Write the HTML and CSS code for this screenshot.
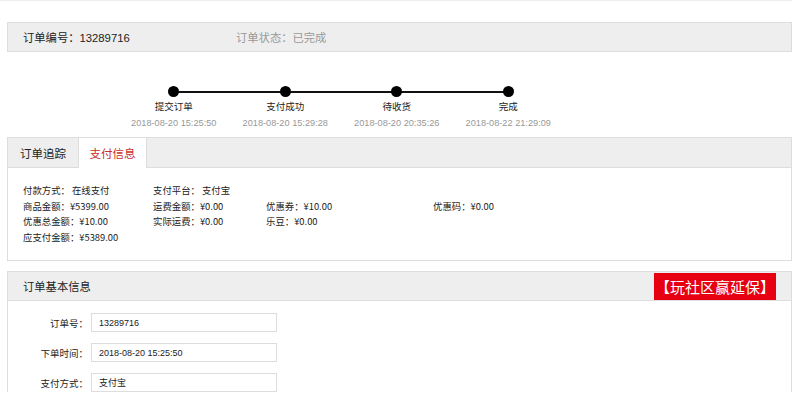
FILE: index.html
```html
<!DOCTYPE html>
<html lang="zh-CN">
<head>
  <meta charset="UTF-8">
  <meta name="viewport" content="width=device-width, initial-scale=1.0">
  <title>订单详情</title>
  <link rel="stylesheet" href="styles.css">
</head>
<body>
  <div class="top-line"></div>
  <main class="order-page">
    <!-- order header -->
    <div class="order-head">
      <span class="order-no">订单编号：13289716</span>
      <span class="order-status">订单状态：已完成</span>
    </div>

    <!-- progress -->
    <div class="timeline">
      <div class="timeline-track"></div>
      <div class="step">
        <span class="dot"></span>
        <span class="step-name">提交订单</span>
        <span class="step-time">2018-08-20 15:25:50</span>
      </div>
      <div class="step">
        <span class="dot"></span>
        <span class="step-name">支付成功</span>
        <span class="step-time">2018-08-20 15:29:28</span>
      </div>
      <div class="step">
        <span class="dot"></span>
        <span class="step-name">待收货</span>
        <span class="step-time">2018-08-20 20:35:26</span>
      </div>
      <div class="step">
        <span class="dot"></span>
        <span class="step-name">完成</span>
        <span class="step-time">2018-08-22 21:29:09</span>
      </div>
    </div>

    <!-- tabs -->
    <section class="panel">
      <div class="tabs">
        <span class="tab">订单追踪</span>
        <span class="tab active">支付信息</span>
      </div>
      <div class="pay-info">
        <div class="pay-row">
          <span class="col col-1">付款方式：&nbsp;在线支付</span>
          <span class="col col-2">支付平台：&nbsp;支付宝</span>
        </div>
        <div class="pay-row">
          <span class="col col-1">商品金额：¥5399.00</span>
          <span class="col col-2">运费金额：¥0.00</span>
          <span class="col col-3">优惠券：¥10.00</span>
          <span class="col">优惠码：¥0.00</span>
        </div>
        <div class="pay-row">
          <span class="col col-1">优惠总金额：¥10.00</span>
          <span class="col col-2">实际运费：¥0.00</span>
          <span class="col col-3">乐豆：¥0.00</span>
        </div>
        <div class="pay-row">
          <span class="col col-1">应支付金额：¥5389.00</span>
        </div>
      </div>
    </section>

    <!-- basic info -->
    <section class="panel basic">
      <div class="panel-head">
        <span class="panel-title">订单基本信息</span>
        <span class="promo">【玩社区赢延保】</span>
      </div>
      <div class="form">
        <div class="form-row">
          <label>订单号：</label>
          <input type="text" value="13289716" readonly>
        </div>
        <div class="form-row">
          <label>下单时间：</label>
          <input type="text" value="2018-08-20 15:25:50" readonly>
        </div>
        <div class="form-row">
          <label>支付方式：</label>
          <input type="text" value="支付宝" readonly>
        </div>
      </div>
    </section>
  </main>
</body>
</html>
```

FILE: styles.css
```css
:root {
  --border: #dddddd;
  --bar-bg: #eeeeee;
  --muted: #999999;
  --text: #333333;
}
body {
  font-family: "Liberation Sans", Arial, "Noto Sans CJK SC", sans-serif;
  margin: 0;
  padding: 0;
  background-color: #ffffff;
  color: var(--text);
}
.top-line {
  width: 792px;
  height: 1px;
  background-color: #eeeeee;
}
.order-page {
  width: 785px;
  margin-left: 7px;
}
.order-head {
  margin-top: 21px;
  height: 28px;
  border: 1px solid var(--border);
  background-color: var(--bar-bg);
  display: flex;
  align-items: center;
  padding-left: 15px;
  font-size: 11.3px;
}
.order-no {
  width: 213px;
  color: #222;
}
.order-status {
  color: var(--muted);
}

.timeline {
  position: relative;
  display: flex;
  margin-left: 111px;
  margin-top: 34px;
  height: 51px;
}
.timeline-track {
  position: absolute;
  left: 56px;
  width: 334px;
  top: 5px;
  height: 2px;
  background-color: #111;
}
.step {
  position: relative;
  width: 111.5px;
  display: flex;
  flex-direction: column;
  align-items: center;
}
.dot {
  width: 11px;
  height: 11px;
  border-radius: 50%;
  background-color: #000;
}
.step-name {
  font-size: 9.5px;
  margin-top: 3px;
  line-height: 14px;
  color: #222;
}
.step-time {
  font-size: 9.2px;
  margin-top: 2px;
  line-height: 14px;
  color: var(--muted);
  white-space: nowrap;
}

.panel {
  border: 1px solid var(--border);
  background-color: #ffffff;
}
.tabs {
  display: flex;
  height: 29px;
  background-color: var(--bar-bg);
  border-bottom: 1px solid var(--border);
}
.tab {
  width: 70px;
  display: flex;
  align-items: center;
  justify-content: center;
  font-size: 11.5px;
  color: #222;
}
.tab.active {
  width: 67px;
  background-color: #ffffff;
  color: #c9302c;
  border-left: 1px solid var(--border);
  border-right: 1px solid var(--border);
  margin-bottom: -1px;
}
.pay-info {
  padding: 15px 0 15px 15px;
  font-size: 9.4px;
  font-family: "Noto Sans CJK SC", sans-serif;
}
.pay-row {
  display: flex;
  height: 15.5px;
  line-height: 15.5px;
  color: #222;
}
.col-1 { width: 130px; }
.col-2 { width: 113px; }
.col-3 { width: 167px; }

.basic {
  margin-top: 10px;
  border-bottom: none;
}
.panel-head {
  height: 28px;
  background-color: var(--bar-bg);
  border-bottom: 1px solid var(--border);
  display: flex;
  align-items: center;
  justify-content: space-between;
  padding-left: 15px;
}
.panel-title {
  font-size: 11.3px;
  color: #222;
}
.promo {
  background-color: #e60012;
  color: #ffffff;
  font-size: 15px;
  height: 27px;
  line-height: 27px;
  width: 122px;
  text-align: center;
  margin-right: 15px;
  margin-top: 1px;
  font-family: "Noto Sans CJK SC", sans-serif;
  overflow: hidden;
}
.form {
  padding-top: 12px;
}
.form-row {
  display: flex;
  align-items: center;
  margin-bottom: 11px;
}
.form-row label {
  width: 80px;
  text-align: right;
  font-size: 9.5px;
  color: #222;
}
.form-row input {
  width: 186px;
  height: 19px;
  box-sizing: border-box;
  border: 1px solid var(--border);
  padding: 0 7px;
  margin: 0 0 0 3px;
  font-size: 9px;
  font-family: "Liberation Sans", Arial, "Noto Sans CJK SC", sans-serif;
  color: #222;
  outline: none;
}
```
